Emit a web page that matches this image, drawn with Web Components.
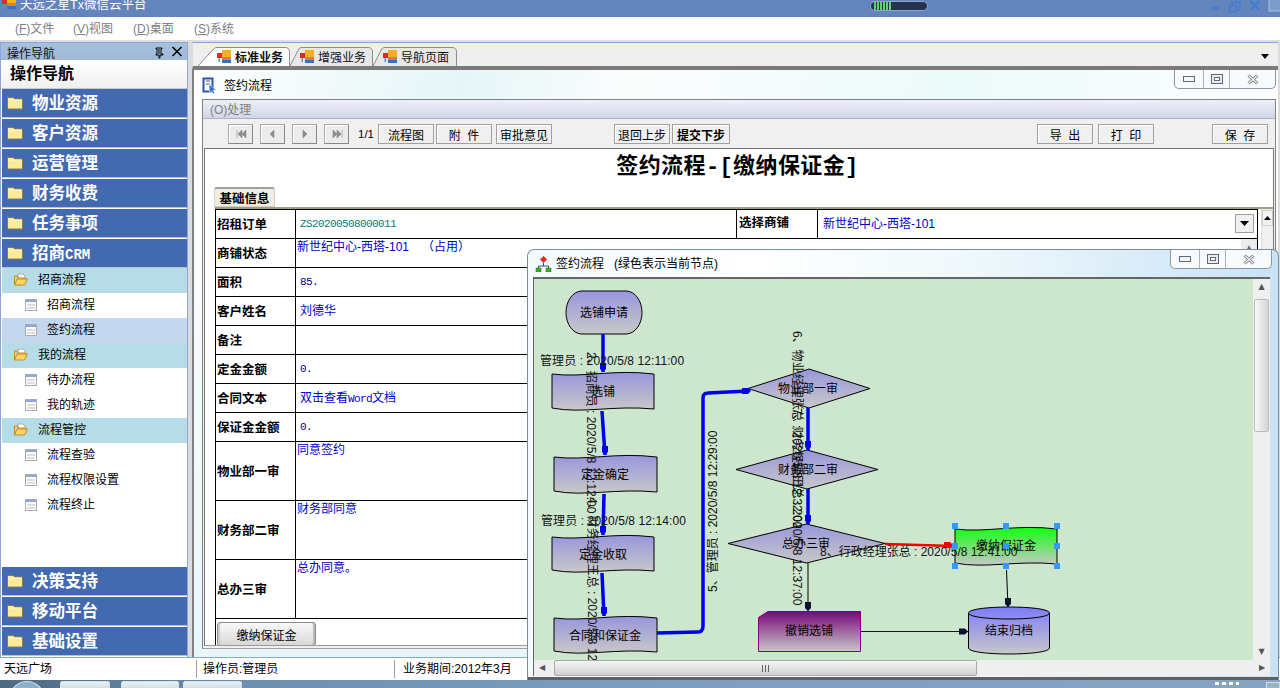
<!DOCTYPE html>
<html lang="zh">
<head>
<meta charset="utf-8">
<title>签约流程</title>
<style>
    html, body { margin: 0; padding: 0; }
    body {
        position: relative;
        width: 1280px;
        height: 688px;
        overflow: hidden;
        display: flex;
        flex-direction: column;
        background: #fff;
        font: 12px "Liberation Sans", "Noto Sans CJK SC", sans-serif;
        color: #000;
    }
    .main { flex: 1; display: flex; min-height: 0; background: #dcdcdc; }
</style>
</head>
<body>
<title-bar>天远之星Tx微信云平台</title-bar>
<menu-bar></menu-bar>
<div class="main">
    <nav-panel>
        <nav-item>物业资源</nav-item>
        <nav-item>客户资源</nav-item>
        <nav-item>运营管理</nav-item>
        <nav-item>财务收费</nav-item>
        <nav-item>任务事项</nav-item>
        <nav-item>招商<span style="font:bold 14px 'Liberation Mono',monospace">CRM</span></nav-item>
        <nav-tree></nav-tree>
        <nav-item>决策支持</nav-item>
        <nav-item>移动平台</nav-item>
        <nav-item>基础设置</nav-item>
    </nav-panel>
    <work-area>
        <tab-strip></tab-strip>
        <mdi-window>
            <tool-bar></tool-bar>
            <sign-form></sign-form>
        </mdi-window>
    </work-area>
</div>
<status-bar></status-bar>
<task-bar></task-bar>
<flow-window></flow-window>

<script>
const CJK = `"Liberation Sans", "Noto Sans CJK SC", sans-serif`;

const appIcon = `<svg width="15" height="14" viewBox="0 0 15 14"><rect x="0" y="3" width="5" height="5" fill="#d83020"/><rect x="1.500" y="8" width="1.500" height="4" fill="#889"/><rect x="5" y="0" width="9" height="7" fill="#f4b020"/><rect x="5" y="7" width="9" height="3" fill="#e87830"/><rect x="5" y="10" width="9" height="3" fill="#3a6cc8"/></svg>`;
const folderIcon = `<svg width="16" height="14" viewBox="0 0 16 14"><path d="M.5 3V1.500h6l1 1.500h8v10H.5z" fill="#fdeb9c" stroke="#8d7c48"/><path d="M1.500 4h13" stroke="#fff8d0"/></svg>`;
const openIcon = `<svg width="14" height="13" viewBox="0 0 14 13"><path d="M4 5V1h5l2 2v3" fill="#fff" stroke="#aaa"/><path d="M.5 3h3v2h8v2" fill="#fbd468" stroke="#c88a18"/><path d="M.5 3v9h10l3-6H3l-2.500 6" fill="#fbd468" stroke="#c88a18"/></svg>`;
const pageIcon = `<svg width="12" height="12" viewBox="0 0 12 12"><rect x=".5" y=".5" width="11" height="11" fill="#fff" stroke="#aaa"/><rect x="1" y="1" width="10" height="2" fill="#8ea6e4"/><rect x="2" y="5" width="8" height="2" fill="#ddd"/><rect x="2" y="8" width="8" height="2" fill="#ddd"/></svg>`;

class ShadowBox extends HTMLElement {
    constructor() {
        super();
        this.attachShadow({ mode: 'open' });
    }
    getMarkup() { return '<slot></slot>'; }
    getStyles() { return ':host { display: block; }'; }
    connectedCallback() {
        const template = document.createElement('template');
        template.innerHTML = `<style>${this.getStyles()}</style>${this.getMarkup()}`;
        this.shadowRoot.appendChild(template.content.cloneNode(true));
    }
}

class TitleBar extends ShadowBox {
    getMarkup() {
        return `
            <span class="icon">${appIcon}</span>
            <span class="text"><slot></slot></span>
            <span class="grip"></span>
            <span class="ctl">
                <svg width="80" height="17" viewBox="0 0 80 17">
                    <rect x="12" y="7" width="7" height="3" fill="#3f7cd0"/>
                    <path d="M32 5.500v-3h8v7h-3M29.500 5.500h7v6h-7z" fill="none" stroke="#3f7cd0" stroke-width="1.400"/>
                    <path d="M50.500 1l9 9M59.500 1l-9 9" stroke="#3f7cd0" stroke-width="2.400"/>
                    <rect x="69" y="-2" width="12" height="13" fill="#7d9ccb" stroke="#a9c0e2"/>
                </svg>
            </span>
        `;
    }
    getStyles() {
        return `
            :host { display: flex; height: 17px; background: #6484bc; overflow: hidden; position: relative; }
            .icon { width: 20px; flex: none; margin-top: -4px; padding-left: 2px; box-sizing: border-box; }
            .text { width: 850px; flex: none; color: #fff; font: 12.500px/12px ${CJK}; margin-top: -1px; }
            .grip {
                flex: none; width: 58px; height: 10px; margin-top: 1px; border-radius: 5px; box-sizing: border-box;
                border: 1px solid #8fa6cc;
                background: repeating-linear-gradient(90deg, #60d070 0 2px, #24344f 2px 3px) 3px 0 / 17px 100% no-repeat, #24344f;
            }
            .ctl { margin-left: auto; height: 17px; }
        `;
    }
}

class MenuBar extends ShadowBox {
    getMarkup() {
        return [['F', '文件', 58], ['V', '视图', 60], ['D', '桌面', 61], ['S', '系统', 50]]
            .map(([k, t, w]) => `<span style="width:${w}px">(<u>${k}</u>)${t}</span>`).join('');
    }
    getStyles() {
        return `
            :host {
                display: flex; height: 25px; flex: none; align-items: center; padding: 0 0 2px 15px; box-sizing: border-box;
                background: #fff; color: #808080; border-bottom: 2px solid #dedede;
            }
            span { white-space: nowrap; font-size: 12px; }
        `;
    }
}

class NavPanel extends ShadowBox {
    getMarkup() {
        return `
            <div class="cap">
                <span>操作导航</span>
                <svg width="40" height="14" viewBox="0 0 40 14">
                    <path transform="translate(7 0)" d="M2 3h6v1H7v5h2v1H6v3H5v-3H2V9h1V4H2zM5 4v5" fill="none" stroke="#000"/>
                    <path transform="translate(5.500 0)" d="M20 2l9 9M29 2l-9 9" stroke="#000" stroke-width="1.500"/>
                </svg>
            </div>
            <div class="title">操作导航</div>
            <slot></slot>
        `;
    }
    getStyles() {
        return `
            :host {
                display: flex; flex-direction: column; width: 188px; flex: none; box-sizing: border-box;
                border-top: 1px solid #82a6e0; border-left: 1px solid #8aa6d4; background: #fff;
                border-right: 1px solid #8ea9d6;
            }
            .cap {
                display: flex; height: 18px; flex: none; align-items: center; justify-content: space-between; box-sizing: border-box;
                padding: 1px 0 0 6px; background: linear-gradient(#a7c0de, #9fb9d9); font-size: 12px; color: #111;
                border-bottom: 1px solid #fff;
            }
            .title {
                height: 27px; flex: none; line-height: 26px; padding-left: 9px; font-size: 16px; font-weight: bold; box-sizing: content-box;
                background: linear-gradient(#ffffff, #f0f0f0); border-bottom: 1px solid #c8c8c8;
            }
        `;
    }
}

class NavItem extends ShadowBox {
    getMarkup() {
        return `<span class="i">${folderIcon}</span><span class="t"><slot></slot></span>`;
    }
    getStyles() {
        return `
            :host {
                display: flex; height: 29px; flex: none; align-items: center; box-sizing: border-box;
                background: #4369b0; color: #fff; border-bottom: 1px solid #c0c0c0; margin-bottom: 1px;
                margin-left: 1px; padding-left: 5px;
            }
            .i { width: 25px; height: 14px; flex: none; }
            .t { font: bold 16.500px/28px ${CJK}; white-space: nowrap; }
        `;
    }
}

class NavTree extends ShadowBox {
    getMarkup() {
        const groups = [
            ['招商流程', ['招商流程', '签约流程']],
            ['我的流程', ['待办流程', '我的轨迹']],
            ['流程管控', ['流程查验', '流程权限设置', '流程终止']]
        ];
        return groups.map(([head, kids]) => `
            <div class="row head">${openIcon}<span>${head}</span></div>
            ${kids.map(k => `<div class="row leaf ${k === '签约流程' ? 'sel' : ''}">${pageIcon}<span>${k}</span></div>`).join('')}
        `).join('');
    }
    getStyles() {
        return `
            :host { display: block; flex: 1; margin: -1px 0 0 1px; background: #fff; min-height: 0; }
            .row { display: flex; align-items: center; height: 25px; box-sizing: border-box; padding-bottom: 2px; font-size: 12px; }
            .row span { margin-bottom: 2px; }
            .head { background: #b6dce7; padding-left: 12px; gap: 10px; }
            .leaf { padding-left: 23px; gap: 10px; }
            .sel { background: #c5d7ef; }
            .head:first-child { height: 26px; }
        `;
    }
}

class WorkArea extends ShadowBox {
    getStyles() {
        return `
            :host {
                flex: 1; min-width: 0; display: flex; flex-direction: column; padding: 0 2px 0 4px;
                background: #dcdcdc;
            }
        `;
    }
}

class TabStrip extends ShadowBox {
    getMarkup() {
        const tabs = [['标准业务', 'on', 92, 17], ['增强业务', '', 83, 10], ['导航页面', '', 84, 10]];
        return `
            ${tabs.map(([t, on, w, s]) => `
                <div class="tab ${on}" style="width:${w}px;padding-left:${s + (on ? 2 : 0)}px">
                    <svg class="shape" width="${w}" height="19" viewBox="0 0 ${w} 19"><path d="M0 19L${s - 1} 1.500Q${s} .5 ${s + 2} .5H${w - 5}Q${w - .5} .5 ${w - .5} 5V19" fill="${on ? '#fff' : '#e8e8e8'}" stroke="#8c8c8c"/></svg>
                    ${appIcon}<span>${t}</span>
                </div>`).join('')}
            <svg class="more" width="8" height="5" viewBox="0 0 8 5"><path d="M0 0h8L4 5z"/></svg>
        `;
    }
    getStyles() {
        return `
            :host {
                display: flex; height: 28px; flex: none; box-sizing: border-box; padding: 4px 0 0 5px; position: relative;
                background: #efefef; border-top: 1px solid #82a6e0; border-left: 1px solid #dadada;
                border-bottom: 4px solid #7a7a7a;
            }
            .tab {
                display: flex; align-items: center; gap: 3px; box-sizing: border-box; height: 19px; flex: none;
                position: relative; font-size: 12px; color: #111; white-space: nowrap;
            }
            .tab svg, .tab span { position: relative; flex: none; }
            .tab .shape { position: absolute; left: 0; top: 0; }
            .on { font-weight: bold; }
            .more { position: absolute; right: 9px; top: 11px; }
        `;
    }
}

class ControlBox extends ShadowBox {
    getMarkup() {
        return `
            <span style="width:29px"><svg width="12" height="6" viewBox="0 0 12 6"><rect x=".5" y=".5" width="11" height="5" fill="#f4f6f8" stroke="#667"/></svg></span>
            <span style="width:26px"><svg width="12" height="10" viewBox="0 0 12 10"><rect x=".5" y=".5" width="11" height="9" fill="#e8ecf0" stroke="#667"/><rect x="3.500" y="3.500" width="5" height="3" fill="#fff" stroke="#667"/></svg></span>
            <span style="flex:1"><svg width="12" height="11" viewBox="0 0 12 11"><path d="M1.500 1.500l9 8M10.500 1.500l-9 8" stroke="#667" stroke-width="3"/><path d="M1.500 1.500l9 8M10.500 1.500l-9 8" stroke="#f4f6f8" stroke-width="1.400"/></svg></span>
        `;
    }
    getStyles() {
        return `
            :host {
                display: flex; width: 102px; height: 19px; flex: none; box-sizing: border-box; margin-left: auto;
                background: #f8fbfd; border: 1px solid #8b97a5; border-top: 0; border-radius: 0 0 5px 5px;
            }
            span { display: flex; align-items: center; justify-content: center; box-sizing: border-box; border-right: 1px solid #a7b2be; }
            span:last-child { border-right: 0; }
        `;
    }
}

class MdiWindow extends ShadowBox {
    getMarkup() {
        return `
            <div class="head">
                <svg width="17" height="17" viewBox="0 0 17 17"><path d="M1.500 1.500h9v13h-9z" fill="#fff" stroke="#2c54a4" stroke-width="2"/><path d="M4 4h4M4 7h4" stroke="#2c54a4"/><path d="M7 7l7 6-3 .5 2 3-1.500.5-2-3-2 2z" fill="#3870c8" stroke="#fff" stroke-width=".5"/></svg>
                <span>签约流程</span>
                <control-box></control-box>
            </div>
            <div class="box">
                <div class="menu">(O)处理</div>
                <slot></slot>
            </div>
        `;
    }
    getStyles() {
        return `
            :host {
                flex: 1; min-height: 0; display: flex; flex-direction: column; box-sizing: border-box;
                border-left: 2px solid #808080; padding: 0 0 8px 8px;
                background: linear-gradient(#f4fbfc, #ffffff 30px, #e8f6fa);
            }
            .head { display: flex; height: 29px; flex: none; align-items: flex-start; gap: 5px; background: linear-gradient(100deg, #fdfefe, #e6f6f8 25%, #fbfdfd 40%, #ecfafb 70%, #fdfefe); margin-left: -8px; padding: 0 2px 0 8px; }
            .head svg { margin-top: 7px; }
            .head span { margin-top: 8px; line-height: 16px; font-size: 12px; }
            .box { flex: 1; min-height: 0; display: flex; flex-direction: column; border: 1px solid #808080; border-bottom-color: #a0a0a0; background: #f0f0f0; margin-right: 2px; }
            .menu { height: 18px; flex: none; line-height: 20px; padding-left: 7px; color: #808080; background: linear-gradient(#eef0f8, #d0d6ea); border-bottom: 1px solid #b0b0b8; }
        `;
    }
}

class ToolButton extends ShadowBox {
    getStyles() {
        return `
            :host {
                display: flex; align-items: center; justify-content: center; width: 56px; height: 20px; flex: none;
                box-sizing: border-box; border: 1px solid #a0a0a0; background: #f0f0f0; font-size: 12px; white-space: nowrap;
                box-shadow: inset 1px 1px 0 #fff;
            }
        `;
    }
}

class ToolBar extends ShadowBox {
    getMarkup() {
        const nav = ['M3 1v8M8 1L4 5l4 4zM12 1L8 5l4 4z', 'M8 1L4 5l4 4z', 'M5 1l4 4-4 4z', 'M3 1l4 4-4 4zM7 1l4 4-4 4zM12 1v8'];
        return `
            <div class="navs">
                ${nav.map(d => `<span class="n"><svg width="14" height="10" viewBox="0 0 14 10"><path d="${d}" fill="#8c8c8c" stroke="#8c8c8c" stroke-width=".6"/></svg></span>`).join('')}
            </div>
            <span class="page">1/1</span>
            <tool-button style="margin-left:3px">流程图</tool-button>
            <tool-button style="margin-left:2px">附&nbsp;&nbsp;件</tool-button>
            <tool-button style="margin-left:4px">审批意见</tool-button>
            <tool-button style="margin-left:62px">退回上步</tool-button>
            <tool-button style="margin-left:2px;width:58px;font-weight:bold">提交下步</tool-button>
            <tool-button style="margin-left:auto">导&nbsp;&nbsp;出</tool-button>
            <tool-button style="margin-left:5px">打&nbsp;&nbsp;印</tool-button>
            <tool-button style="margin-left:58px">保&nbsp;&nbsp;存</tool-button>
        `;
    }
    getStyles() {
        return `
            :host { display: flex; height: 29px; flex: none; box-sizing: border-box; padding: 5px 7px 0 25px; background: #f0f0f0; }
            .navs { display: flex; gap: 7px; }
            .n {
                width: 25px; height: 20px; display: flex; align-items: center; justify-content: center; box-sizing: border-box;
                border: 1px solid #a8a8a8; border-right-color: #888; border-bottom-color: #888; background: #ececec;
                box-shadow: inset 1px 1px 0 #fff;
            }
            .page { margin-left: 9px; width: 17px; line-height: 20px; font-size: 11.500px; white-space: nowrap; }
        `;
    }
}

class InfoRow extends ShadowBox {
    getMarkup() {
        return `
            <div class="label">${this.getAttribute('label')}</div>
            <div class="value"><slot></slot></div>
        `;
    }
    getStyles() {
        const h = this.getAttribute('h') || 29;
        return `
            :host { display: flex; height: ${h}px; box-sizing: border-box; border-bottom: 1px solid #000; flex: none; }
            .label {
                width: 80px; flex: none; box-sizing: border-box; border-right: 1px solid #000; padding: 0 0 2px 1px;
                display: flex; align-items: center; font: bold 12.500px ${CJK}; white-space: nowrap;
            }
            .value { flex: 1; min-width: 0; display: flex; font-size: 12px; color: #0000c8; position: relative; }
        `;
    }
}

class SignForm extends ShadowBox {
    getMarkup() {
        return `
            <h1>签约流程<span>-[</span>缴纳保证金<span>]</span></h1>
            <div class="tabs"><span>基础信息</span></div>
            <div class="body">
                <div class="grid">
                    <info-row label="招租订单">
                        <span class="mono" style="width:441px;padding:6px 0 0 4px;box-sizing:border-box;color:#008070;border-right:1px solid #000">ZS20200508000011</span>
                        <span class="lab2">选择商铺</span>
                        <span style="padding:6px 0 0 5px;line-height:16px">新世纪中心-西塔-101</span>
                        <span class="drop"><svg width="9" height="5" viewBox="0 0 9 5"><path d="M0 0h9L4.500 5z"/></svg></span>
                    </info-row>
                    <info-row label="商铺状态"><span class="top">新世纪中心-西塔-101<span style="margin-left:13px">（占用）</span></span><span class="inner">▲</span></info-row>
                    <info-row label="面积"><span class="mid mono" style="color:#000080">85.</span></info-row>
                    <info-row label="客户姓名"><span class="mid">刘德华</span></info-row>
                    <info-row label="备注"></info-row>
                    <info-row label="定金金额"><span class="mid mono" style="color:#000080">0.</span></info-row>
                    <info-row label="合同文本"><span class="mid">双击查看<span class="mono">Word</span>文档</span></info-row>
                    <info-row label="保证金金额"><span class="mid mono" style="color:#000080">0.</span></info-row>
                    <info-row label="物业部一审" h="59"><span class="top">同意签约</span></info-row>
                    <info-row label="财务部二审" h="59"><span class="top">财务部同意</span></info-row>
                    <info-row label="总办三审" h="59"><span class="top">总办同意。</span></info-row>
                </div>
                <div class="bar"><span><svg width="7" height="4" viewBox="0 0 7 4"><path d="M3.500 0L7 4H0z"/></svg></span></div>
            </div>
            <div class="act">缴纳保证金</div>
        `;
    }
    getStyles() {
        return `
            :host {
                flex: 1; min-height: 0; display: flex; flex-direction: column; box-sizing: border-box; background: #fff;
                margin: 0 1px 2px 1px; border: 1px solid #777; border-bottom-color: #999; overflow: hidden; position: relative;
            }
            h1 { margin: 3px 0 0; height: 28px; text-align: center; font: bold 22px/28px ${CJK}; letter-spacing: .4px; flex: none; padding-right: 3px; }
            h1 span { font-family: "Liberation Mono", monospace; }
            .tabs { display: flex; height: 20px; margin: 7px 0 0 9px; flex: none; }
            .tabs span {
                width: 61px; box-sizing: border-box; background: #f2efe2; border: 1px solid #d5d2c4; border-top: 2px solid #9aa0a8;
                border-radius: 3px 3px 0 0; font: bold 12.500px/21px ${CJK}; text-align: center;
            }
            .body { display: flex; margin-left: 10px; border-top: 2px solid #a09c8c; flex: 1; min-height: 0; }
            .grid { width: 1043px; flex: none; box-sizing: border-box; border-left: 1px solid #000; border-top: 1px solid #000; border-right: 1px solid #000; }
            .mono { font: 11px/16px "Liberation Mono", monospace; letter-spacing: -.6px; }
            .top { padding: 0 0 0 1px; line-height: 16px; white-space: nowrap; }
            .mid { align-self: center; padding-left: 4px; white-space: nowrap; line-height: 16px; }
            .lab2 { width: 81px; flex: none; box-sizing: border-box; color: #000; border-right: 1px solid #000; padding: 5px 0 0 2px; font: bold 12.500px/16px ${CJK}; }
            .drop {
                position: absolute; right: 3px; top: 4px; width: 19px; height: 19px; box-sizing: border-box;
                display: flex; align-items: center; justify-content: center; background: #f0f0f0; border: 1px solid #a0a0a0;
            }
            .inner {
                position: absolute; right: 0; top: 0; bottom: 0; width: 16px; background: #ececec; color: #666;
                font-size: 8px; line-height: 18px; text-align: center;
            }
            .bar { margin-left: 3px; width: 11px; background: #f0f0f0; border-left: 1px solid #ddd; position: relative; }
            .bar span { position: absolute; left: 0; right: 0; top: 1px; height: 16px; border: 1px solid #ccc; box-sizing: border-box; background: #f4f4f4; display: flex; align-items: center; justify-content: center; }
            .act {
                position: absolute; left: 12px; top: 473px; width: 99px; height: 24px; box-sizing: border-box;
                display: flex; align-items: center; justify-content: center; border: 1px solid #8c8c8c; border-radius: 3px;
                background: linear-gradient(#f8f8f8, #d8d8d8); font-size: 12px; box-shadow: inset 2px 0 0 #ccc, inset -2px 0 0 #bbb;
            }
        `;
    }
}

class StatusBar extends ShadowBox {
    getMarkup() {
        return `<span style="width:197px;padding-left:4px">天远广场</span><span style="width:198px;padding-left:6px">操作员:管理员</span><span style="padding-left:8px;width:140px">业务期间:2012年3月</span>`;
    }
    getStyles() {
        return `
            :host { display: flex; height: 23px; flex: none; box-sizing: border-box; background: #fff; border-top: 1px solid #82a6e0; padding-top: 2px; }
            span { box-sizing: border-box; height: 18px; line-height: 18px; border-right: 1px solid #a0a0a0; font-size: 12px; white-space: nowrap; }
            span:last-child { border-right: 0; }
        `;
    }
}

class TaskBar extends ShadowBox {
    getMarkup() {
        return `
            <i class="orb"></i>
            <i class="b" style="left:60px;width:50px"></i>
            <i class="b" style="left:121px;width:58px"></i>
            <i class="b" style="left:183px;width:59px"></i>
            <i class="t" style="left:1215px;width:24px"></i>
            <i class="d"></i>
        `;
    }
    getStyles() {
        return `
            :host { display: block; height: 8px; flex: none; position: relative; overflow: hidden; background: linear-gradient(90deg, #4f6a80, #6f8faf 240px, #7f9fc0 700px, #87a4c2); }
            i { position: absolute; display: block; }
            .orb { left: 10px; top: 1px; width: 32px; height: 30px; border-radius: 50%; background: #8cb0c8; border: 1px solid #d5e2ea; }
            .b { top: 1px; height: 12px; border: 1px solid #d8e2ea; border-radius: 2px 2px 0 0; background: linear-gradient(#e8f0f4, #c4d4e0); box-sizing: border-box; }
            .t { top: 2px; height: 3px; background: repeating-linear-gradient(90deg, #fff 0 4px, transparent 4px 7px); }
            .d { right: 0; top: 2px; width: 14px; height: 8px; background: #9ab2c8; border: 1px solid #d0dce6; box-sizing: border-box; }
        `;
    }
}

class FlowChart extends ShadowBox {
    wave(x, y, w, h) {
        return `M${x} ${y + 2}C${x + w * .3} ${y + 6} ${x + w * .6} ${y - 3} ${x + w} ${y + 2}L${x + w} ${y + h - 2}C${x + w * .6} ${y + h - 6} ${x + w * .3} ${y + h + 3} ${x} ${y + h - 3}Z`;
    }
    diamond(l, r, t, b) {
        const cx = (l + r) / 2, cy = (t + b) / 2;
        return `M${l} ${cy}L${cx} ${t}L${r} ${cy}L${cx} ${b}Z`;
    }
    head(x, y, dir, c) {
        const d = {
            down: `M${x - 3} ${y - 9}h6v6l-3 3l-3 -3z`,
            right: `M${x - 9} ${y - 3}v6h6l3 -3l-3 -3z`
        }[dir];
        return `<path d="${d}" fill="${c}"/>`;
    }
    getMarkup() {
        const shapes = [
            ['M582 291H626A16 21.500 0 0 1 626 334H582A16 21.500 0 0 1 582 291Z', 'g1', '选铺申请', 604, 313],
            [this.wave(552, 372, 102, 39), 'g1', '选铺', 603, 392],
            [this.wave(554, 455, 103, 39), 'g1', '定金确定', 605, 475],
            [this.wave(552, 535, 102, 38), 'g1', '定金收取', 603, 555],
            [this.wave(554, 616, 103, 38), 'g1', '合同和保证金', 605, 636],
            [this.diamond(748, 870, 369, 408), 'g1', '物业部一审', 808, 389],
            [this.diamond(736, 878, 450, 489), 'g1', '财务部二审', 808, 470],
            [this.diamond(728, 885, 524, 563), 'g1', '总办三审', 806, 544]
        ];
        const lines = [
            ['M603 334V372', '#0000f0', 3.500], ['M602 411L605 455', '#0000f0', 3.500],
            ['M604 494L603 535', '#0000f0', 3.500], ['M602 573L604 616', '#0000f0', 3.500],
            ['M657 633L698 632Q703 632 703 626V398Q703 393 708 393L748 391', '#0000f0', 3.500],
            ['M808 408V450', '#0000f0', 3.500], ['M808 489V524', '#0000f0', 3.500],
            ['M885 544L953 546', '#f00000', 2.500],
            ['M808 563V611', '#000', 1], ['M1006.500 570L1008 607', '#000', 1], ['M861 631.500H968', '#101030', 1]
        ];
        const handles = [955, 1006, 1057].flatMap(x => [526, 546, 566].map(y =>
            `<rect x="${x - 3}" y="${y - 3}" width="6" height="6" fill="#3399ff"/>`)).join('');
        const vtext = [
            [587, 352, 90, '2、招商员 : 2020/5/8 12:12:00'],
            [588, 497, 90, '4、财务经理王总 : 2020/5/8 12:14:00'],
            [717, 592, -90, '5、管理员 : 2020/5/8 12:29:00'],
            [793, 331, 90, '6、物业经理张总 : 2020/5/8 12:32:00'],
            [793, 408, 90, '7、财务经理田总 : 2020/5/8 12:37:00']
        ];
        return `
            <svg width="719" height="381" viewBox="534 279 719 381" font-family='${CJK.replace(/"/g, "'")}' font-size="12">
                <defs>
                    <linearGradient id="g1" x1="0" y1="0" x2="0" y2="1"><stop offset="0" stop-color="#9896dc"/><stop offset="1" stop-color="#c8c8c8"/></linearGradient>
                    <linearGradient id="g2" x1="0" y1="0" x2="0" y2="1"><stop offset="0" stop-color="#780878"/><stop offset="1" stop-color="#c8c8c8"/></linearGradient>
                    <linearGradient id="g3" x1="0" y1="0" x2="0" y2="1"><stop offset="0" stop-color="#10ff10"/><stop offset="1" stop-color="#c8c8c8"/></linearGradient>
                    <linearGradient id="g4" x1="0" y1="0" x2="0" y2="1"><stop offset="0" stop-color="#7c7cfa"/><stop offset="1" stop-color="#c8c8c8"/></linearGradient>
                </defs>
                ${shapes.map(([d, g]) => `<path d="${d}" fill="url(#${g})" stroke="#000" stroke-width="1"/>`).join('')}
                <path d="M758.500 617.500L768 611.500H860.500V651.500H758.500Z" fill="url(#g2)" stroke="#800080"/>
                <path d="${this.wave(955, 527, 102, 39)}" fill="url(#g3)" stroke="#000"/>
                <path d="M968.500 613C968.500 605 1049.500 605 1049.500 613V648C1049.500 656 968.500 656 968.500 648Z" fill="url(#g4)" stroke="#000"/>
                <path d="M968.500 613C968.500 621 1049.500 621 1049.500 613" fill="none" stroke="#000"/>
                ${lines.map(([d, c, w]) => `<path d="${d}" fill="none" stroke="${c}" stroke-width="${w}"/>`).join('')}
                ${this.head(603, 372, 'down', '#0000f0')}${this.head(605, 455, 'down', '#0000f0')}
                ${this.head(603, 535, 'down', '#0000f0')}${this.head(604, 616, 'down', '#0000f0')}
                ${this.head(751, 391, 'right', '#0000f0')}${this.head(808, 450, 'down', '#0000f0')}
                ${this.head(808, 524, 'down', '#0000f0')}${this.head(953, 545, 'right', '#f00000')}
                ${this.head(808, 611, 'down', '#101030')}${this.head(1008, 607, 'down', '#101030')}
                ${this.head(968, 631.500, 'right', '#101030')}
                ${shapes.map(([, , t, x, y]) => `<text x="${x}" y="${y + 4}" text-anchor="middle">${t}</text>`).join('')}
                <text x="808" y="635" text-anchor="middle" dx="1">撤销选铺</text>
                <text x="1006" y="550" text-anchor="middle">缴纳保证金</text>
                <text x="1009" y="635" text-anchor="middle">结束归档</text>
                ${vtext.map(([x, y, r, t]) => `<text x="${x}" y="${y}" transform="rotate(${r} ${x} ${y})" fill="#111">${t}</text>`).join('')}
                <text x="540" y="365" fill="#111" letter-spacing=".1">管理员 : 2020/5/8 12:11:00</text>
                <text x="541" y="525" fill="#111" letter-spacing=".1">管理员 : 2020/5/8 12:14:00</text>
                <text x="820" y="556" fill="#111">8、行政经理张总 : 2020/5/8 12:41:00</text>
                ${handles}
            </svg>
        `;
    }
    getStyles() {
        return `
            :host { display: block; width: 719px; height: 381px; flex: none; background: #cde6ce; overflow: hidden; }
            svg { display: block; }
        `;
    }
}

class FlowWindow extends ShadowBox {
    getMarkup() {
        return `
            <div class="head">
                <svg width="17" height="16" viewBox="0 0 17 16"><path d="M8.500 0l3.500 3.500L8.500 7 5 3.500z" fill="#e8281c"/><path d="M8.500 7v3M3.500 12v-2h10v2" fill="none" stroke="#2850a8"/><rect x="1" y="12" width="5" height="4" fill="#38b020" stroke="#1c7010" stroke-width=".5"/><rect x="11" y="12" width="5" height="4" fill="#38b020" stroke="#1c7010" stroke-width=".5"/></svg>
                <span>签约流程 &nbsp;&nbsp;(绿色表示当前节点)</span>
                <control-box></control-box>
            </div>
            <div class="mid">
                <flow-chart></flow-chart>
                <div class="vbar"><b>▲</b><i></i><b style="margin-top:auto">▼</b></div>
            </div>
            <div class="hbar"><b>◀</b><i></i><b style="margin-left:auto">▶</b></div>
        `;
    }
    getStyles() {
        return `
            :host {
                position: absolute; left: 527px; top: 249px; width: 752px; height: 431px; box-sizing: border-box;
                display: flex; flex-direction: column; padding: 0 8px 3px 5px; border: 1px solid #7c8ca0; border-bottom: 0; border-radius: 7px 7px 0 0;
                background: linear-gradient(90deg, #f4fafc, #ffffff 30%, #eef8fb 60%, #c9e2f6);
                box-shadow: inset 0 -3px 0 #606060;
            }
            .head { display: flex; height: 27px; flex: none; align-items: flex-start; gap: 4px; padding-left: 2px; margin-right: -2px; }
            .head svg { margin-top: 6px; }
            .head span { margin-top: 6px; font-size: 12px; line-height: 16px; }
            .mid { display: flex; border-top: 2px solid #666; flex: none; height: 381px; border-left: 1px solid #666; background: #f0f0f0; }
            .vbar { flex: 1; display: flex; flex-direction: column; background: #efefef; }
            .vbar b { font: 8px/16px "DejaVu Sans", sans-serif; color: #555; text-align: center; height: 16px; }
            .vbar i { display: block; height: 131px; margin: 4px 1px 0; border: 1px solid #bbb; border-radius: 2px; background: linear-gradient(90deg, #f8f8f8, #d4d4d4); }
            .hbar { display: flex; height: 16px; flex: none; background: #efefef; border-left: 1px solid #666; }
            .hbar b { font: 8px/16px "DejaVu Sans", sans-serif; color: #555; width: 16px; text-align: center; }
            .hbar i {
                display: block; margin-left: 4px; width: 423px; box-sizing: border-box; border: 1px solid #aaa; border-radius: 2px;
                background: linear-gradient(90deg, #666 0 1px, transparent 1px 3px, #666 3px 4px, transparent 4px 6px, #666 6px 7px) center / 7px 7px no-repeat, linear-gradient(#f6f6f6, #d0d0d0);
            }
        `;
    }
}

customElements.define('title-bar', TitleBar);
customElements.define('menu-bar', MenuBar);
customElements.define('nav-panel', NavPanel);
customElements.define('nav-item', NavItem);
customElements.define('nav-tree', NavTree);
customElements.define('work-area', WorkArea);
customElements.define('tab-strip', TabStrip);
customElements.define('control-box', ControlBox);
customElements.define('mdi-window', MdiWindow);
customElements.define('tool-button', ToolButton);
customElements.define('tool-bar', ToolBar);
customElements.define('info-row', InfoRow);
customElements.define('sign-form', SignForm);
customElements.define('status-bar', StatusBar);
customElements.define('task-bar', TaskBar);
customElements.define('flow-chart', FlowChart);
customElements.define('flow-window', FlowWindow);
</script>
</body>
</html>
